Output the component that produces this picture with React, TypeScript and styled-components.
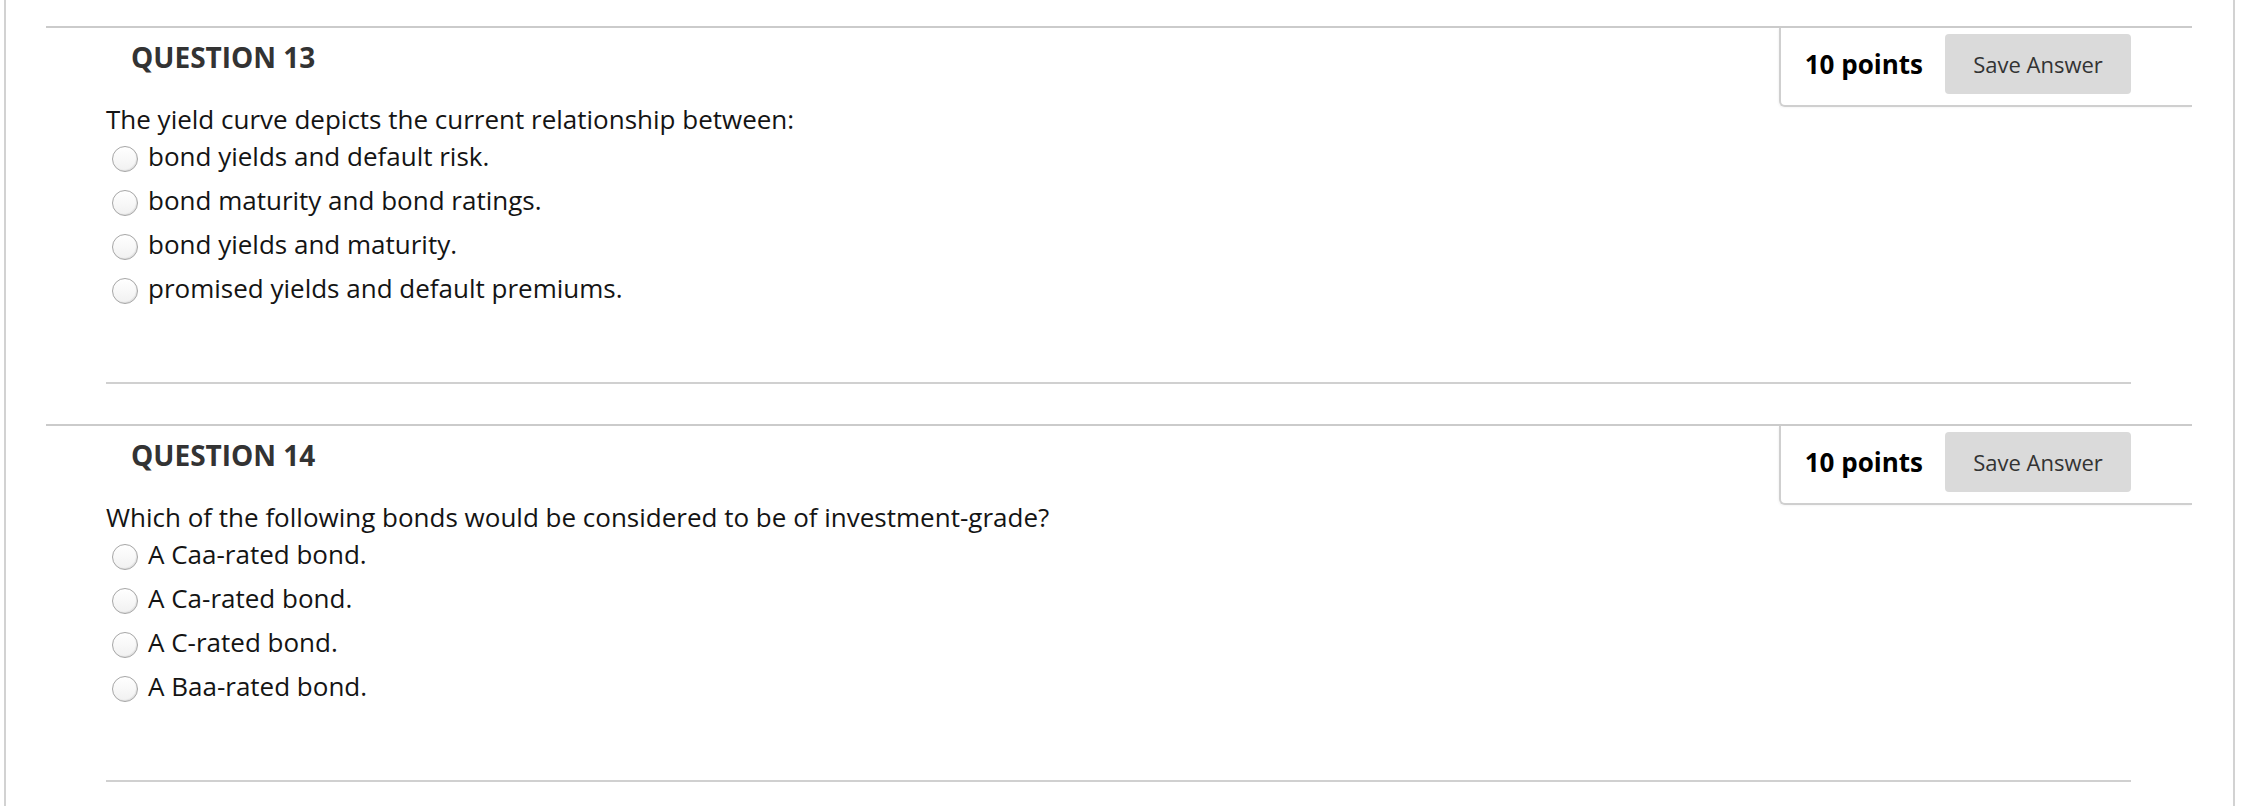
import React from "react";
import styled, { createGlobalStyle } from "styled-components";

interface Question {
  number: number;
  points: number;
  text: string;
  options: string[];
}

const questions: Question[] = [
  {
    number: 13,
    points: 10,
    text: "The yield curve depicts the current relationship between:",
    options: [
      "bond yields and default risk.",
      "bond maturity and bond ratings.",
      "bond yields and maturity.",
      "promised yields and default premiums.",
    ],
  },
  {
    number: 14,
    points: 10,
    text: "Which of the following bonds would be considered to be of investment-grade?",
    options: [
      "A Caa-rated bond.",
      "A Ca-rated bond.",
      "A C-rated bond.",
      "A Baa-rated bond.",
    ],
  },
];

const QuestionBlock: React.FC<{ q: Question }> = ({ q }) => {
  return (
    <Block>
      <Header>
        <Title>QUESTION {q.number}</Title>
        <PointsBox>
          <Points>{q.points} points</Points>
          <SaveButton type="button">Save Answer</SaveButton>
        </PointsBox>
      </Header>
      <Body>
        <Prompt>{q.text}</Prompt>
        <Options>
          {q.options.map((opt, i) => (
            <OptionRow key={i}>
              <Radio />
              <OptionText>{opt}</OptionText>
            </OptionRow>
          ))}
        </Options>
        <Separator />
      </Body>
    </Block>
  );
};

const App: React.FC = () => {
  return (
    <>
      <GlobalStyle />
      <Frame>
        {questions.map(q => (
          <QuestionBlock key={q.number} q={q} />
        ))}
      </Frame>
    </>
  );
};

const GlobalStyle = createGlobalStyle`
  html, body {
    margin: 0;
    padding: 0;
    background: #fff;
    overflow: hidden;
  }
  body {
    font-family: "Open Sans", "Liberation Sans", sans-serif;
  }
  * {
    box-sizing: border-box;
  }
`;

const Frame = styled.div`
  margin: 0 15px 0 4px;
  min-height: 100vh;
  border-left: 2px solid #d2d2d2;
  border-right: 2px solid #d2d2d2;
  padding: 26px 41px 0 40px;
`;

const Block = styled.section`
  border-top: 2px solid #cbcbcb;
  margin-bottom: 40px;
`;

const Header = styled.div`
  display: flex;
  justify-content: space-between;
  align-items: flex-start;
`;

const Title = styled.h2`
  margin: 10px 0 0 85px;
  font-size: 28px;
  line-height: 38px;
  font-weight: 700;
  color: #333;
`;

const PointsBox = styled.div`
  display: flex;
  align-items: center;
  gap: 22px;
  padding: 6px 61px 11px 24px;
  border-left: 2px solid #cfcfcf;
  border-bottom: 2px solid #cfcfcf;
  border-bottom-left-radius: 6px;
  box-shadow: -1px 1px 2px rgba(0, 0, 0, 0.04);
  background: #fff;
`;

const Points = styled.span`
  font-size: 26px;
  font-weight: 700;
  color: #000;
  white-space: nowrap;
`;

const SaveButton = styled.button`
  width: 186px;
  height: 60px;
  border: none;
  border-radius: 4px;
  background: #dadada;
  color: #333;
  font-family: "Open Sans", "Liberation Sans", sans-serif;
  font-size: 22px;
  padding: 0;
`;

const Body = styled.div`
  padding: 0 61px 0 60px;
`;

const Prompt = styled.div`
  margin-top: -3px;
  font-size: 26px;
  line-height: 30px;
  color: #141414;
`;

const Options = styled.div`
  display: flex;
  flex-direction: column;
`;

const OptionRow = styled.label`
  display: flex;
  align-items: center;
  height: 44px;
  gap: 10px;
`;

const Radio = styled.span`
  width: 26px;
  height: 26px;
  margin: 6px 0 0 6px;
  border-radius: 50%;
  border: 1px solid #a6a6a6;
  background: linear-gradient(#ffffff, #f1f1f1);
  box-shadow: inset -1px -1px 1px rgba(0, 0, 0, 0.08);
  flex-shrink: 0;
`;

const OptionText = styled.span`
  font-size: 26px;
  color: #141414;
`;

const Separator = styled.hr`
  margin: 72px 0 0 0;
  border: none;
  border-top: 2px solid #d0d0d0;
`;

export default App;
